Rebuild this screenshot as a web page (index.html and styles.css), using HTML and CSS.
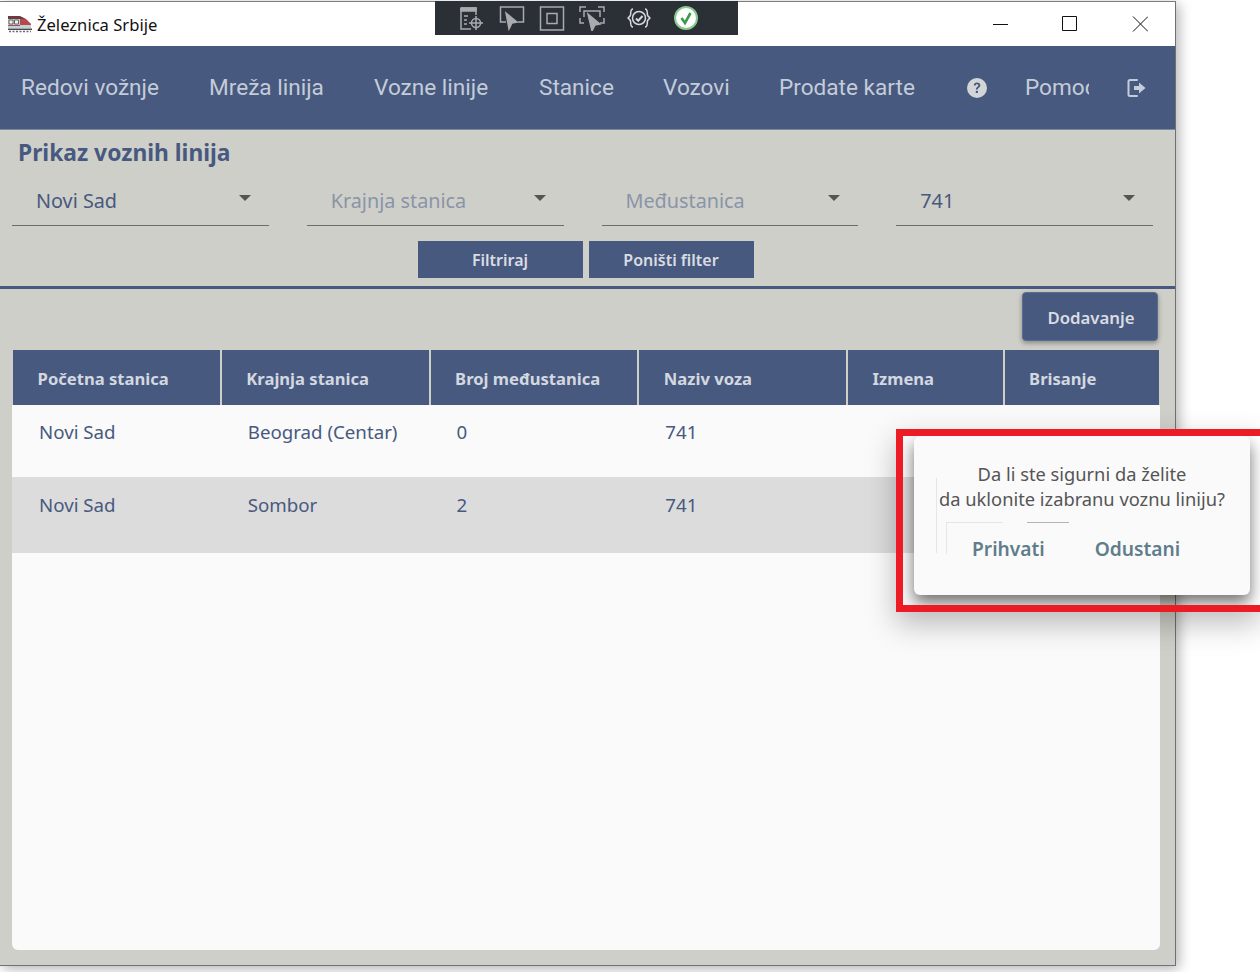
FILE: index.html
```html
<!DOCTYPE html>
<html lang="sr">

<head>
    <meta charset="UTF-8">
    <title>Železnica Srbije</title>
    <link rel="stylesheet" href="styles.css">
</head>

<body>
    <div class="window">
        <div class="titlebar">
            <svg class="app-icon" width="26" height="18" viewBox="0 0 26 18">
                <path d="M1 1h12l6 3H1z" fill="#6f3a3e" />
                <path d="M1 4h18l5 5v4H1z" fill="#c4d0d6" />
                <path d="M13 4h6l5 5v1H13z" fill="#b5484c" />
                <path d="M2 5h4v4H2zM7.500 5h4v4h-4z" fill="#eef2f4" stroke="#4a4a4a" stroke-width=".8" />
                <path d="M1 10.500h12" stroke="#b5484c" stroke-width="1" />
                <path d="M1 13.500h24V15H1z" fill="#4a4a4a" />
                <path d="M2 16.500h22" stroke="#6a6a6a" stroke-width="1.500" stroke-dasharray="2 1.500" />
            </svg>
            <span class="app-title">Železnica Srbije</span>
            <div class="win-controls">
                <svg width="16" height="16" viewBox="0 0 16 16">
                    <path d="M1 8.500h15" stroke="#111" fill="none" />
                </svg>
                <svg width="16" height="16" viewBox="0 0 16 16">
                    <path d="M.5 .5h14v14H.5z" stroke="#111" fill="none" />
                </svg>
                <svg width="16" height="16" viewBox="0 0 16 16">
                    <path d="M1 .5l15 15M16 .5l-15 15" stroke="#111" fill="none" />
                </svg>
            </div>
        </div>

        <ul class="nav">
            <li class="nav-redovi">Redovi vožnje</li>
            <li class="nav-mreza">Mreža linija</li>
            <li class="nav-vozne">Vozne linije</li>
            <li class="nav-stanice">Stanice</li>
            <li class="nav-vozovi">Vozovi</li>
            <li class="nav-karte">Prodate karte</li>
            <li class="nav-help">
                <svg width="20" height="20" viewBox="0 0 20 20">
                    <circle cx="10" cy="10" r="10" fill="#d3d6d8" />
                    <path d="M6.800 7.600c0-2 1.400-3.100 3.300-3.100s3.200 1.100 3.200 2.800c0 2.400-2.500 2.300-2.500 4.300H8.900c0-3 2.400-2.800 2.400-4.200 0-.7-.5-1.200-1.300-1.200s-1.300.5-1.400 1.400z" fill="#48597f" />
                    <rect x="8.800" y="12.800" width="2.100" height="2.200" fill="#48597f" />
                </svg>
            </li>
            <li class="nav-pomoc"><span>Pomoć</span></li>
            <li class="nav-logout">
                <svg width="19" height="20" viewBox="0 0 19 20">
                    <path d="M10 2H3a1.500 1.500 0 0 0-1.500 1.500v13A1.500 1.500 0 0 0 3 18h7" fill="none" stroke="#c3ccd8" stroke-width="2" stroke-linecap="round" />
                    <path d="M7 8h5V4.500L18.500 10 12 15.500V12H7z" fill="#c3ccd8" />
                </svg>
            </li>
        </ul>

        <div class="filter-panel">
            <h2 class="page-title">Prikaz voznih linija</h2>
            <div class="filters">
                <div class="select">Novi Sad<i class="arrow"></i></div>
                <div class="select empty">Krajnja stanica<i class="arrow"></i></div>
                <div class="select empty">Međustanica<i class="arrow"></i></div>
                <div class="select">741<i class="arrow"></i></div>
            </div>
            <div class="filter-buttons">
                <button type="button" class="btn">Filtriraj</button>
                <button type="button" class="btn">Poništi filter</button>
            </div>
        </div>

        <div class="content">
            <div class="add-row">
                <button type="button" class="btn-add">Dodavanje</button>
            </div>
            <div class="table">
                <div class="table-head">
                    <div class="th w-wide">Početna stanica</div>
                    <div class="th w-wide">Krajnja stanica</div>
                    <div class="th w-wide">Broj međustanica</div>
                    <div class="th w-wide">Naziv voza</div>
                    <div class="th w-narrow">Izmena</div>
                    <div class="th w-narrow">Brisanje</div>
                </div>
                <div class="table-row">
                    <div class="td w-wide">Novi Sad</div>
                    <div class="td w-wide">Beograd (Centar)</div>
                    <div class="td w-wide">0</div>
                    <div class="td w-wide">741</div>
                </div>
                <div class="table-row alt">
                    <div class="td w-wide">Novi Sad</div>
                    <div class="td w-wide">Sombor</div>
                    <div class="td w-wide">2</div>
                    <div class="td w-wide">741</div>
                </div>
            </div>
        </div>
    </div>

    <!-- alat za debug preko naslovne trake -->
    <div class="debug-bar">
        <svg width="26" height="26" viewBox="0 0 26 26" fill="none" stroke="#a9abae" stroke-width="1.500">
            <path d="M2 3h15v7M2 3v21h10" />
            <path d="M2 3h15v3H2z" fill="#a9abae" />
            <path d="M5 11h4M5 15h3M5 19h3" />
            <circle cx="17" cy="18" r="4.500" />
            <path d="M17 11v14M10 18h14" />
        </svg>
        <svg width="26" height="26" viewBox="0 0 26 26" fill="none" stroke="#a9abae" stroke-width="1.500">
            <path d="M7 17H1.500V2h23v15H19" />
            <path d="M7 8l11 9-5 1-3 6z" fill="#a9abae" />
        </svg>
        <svg width="26" height="26" viewBox="0 0 26 26" fill="none" stroke="#a9abae" stroke-width="1.500">
            <path d="M1.500 2h23v23h-23z" />
            <path d="M8 8.500h10v10H8z" />
        </svg>
        <svg width="26" height="26" viewBox="0 0 26 26" fill="none" stroke="#a9abae" stroke-width="1.500">
            <path d="M1 7V2h6M19 2h6v5M1 13v5h4M25 13v5h-4M5 12V6h16v6" />
            <path d="M9 9l12 10-5 1-3 6z" fill="#a9abae" />
        </svg>
        <svg class="gap-left" width="26" height="26" viewBox="0 0 26 26" fill="none" stroke="#d8d9da" stroke-width="1.500">
            <path d="M7 4C4 4 5 8 4.500 10S2 12.500 2 13s2 1 2.500 3S4 22 7 22M19 4c3 0 2 4 2.500 6s2.500 2.500 2.500 3-2 1-2.500 3 .5 6-2.500 6" />
            <circle cx="13" cy="13" r="6.500" />
            <path d="M10 13.500l2.200 2.200L16.500 11" stroke-width="2" />
        </svg>
        <svg class="gap-left" width="26" height="26" viewBox="0 0 26 26">
            <circle cx="13" cy="13" r="11" fill="#fff" stroke="#86c98c" stroke-width="2" />
            <path d="M8.500 13l3.500 5 5.500-10" fill="none" stroke="#3f9a48" stroke-width="2.600" />
        </svg>
    </div>

    <div class="dialog-frame">
        <div class="dialog">
            <p class="dialog-text">Da li ste sigurni da želite<br>da uklonite izabranu voznu liniju?</p>
            <div class="dialog-actions">
                <button type="button" class="dialog-btn">Prihvati</button>
                <button type="button" class="dialog-btn">Odustani</button>
            </div>
            <i class="ghost-left"></i>
            <i class="ghost-corner"></i>
            <i class="ghost-dark"></i>
        </div>
    </div>
</body>

</html>
```

FILE: styles.css
```css
/* Prozor aplikacije */
html,
body {
    margin: 0;
    padding: 0;
    height: 972px;
    overflow: hidden;
    background-color: #fff;
}

body {
    font-family: "Noto Sans", sans-serif;
    position: relative;
}

.window {
    width: 1175px;
    height: 963px;
    margin-top: 1px;
    border-top: 1px solid #7d7d7d;
    border-right: 1px solid #707070;
    border-bottom: 1px solid #6f7378;
    box-shadow: 3px 3px 12px rgba(0, 0, 0, 0.3);
    background-color: #cecfc8;
    display: flex;
    flex-direction: column;
}

.titlebar {
    height: 44px;
    flex: none;
    background-color: #fff;
    display: flex;
    align-items: center;
    padding-left: 7px;
}

.app-icon {
    margin-right: 4px;
}

.app-title {
    font-size: 16.6px;
    color: #111;
}

.win-controls {
    margin-left: auto;
    display: flex;
    gap: 54px;
    padding-right: 27px;
}

/* Glavni meni */
.nav {
    list-style-type: none;
    margin: 0;
    padding: 0;
    height: 83px;
    flex: none;
    background-color: #48597f;
    border-bottom: 1px solid #7c88a0;
    display: flex;
    align-items: center;
    font-family: Roboto, sans-serif;
    font-size: 22.6px;
    color: #c3ccd8;
    white-space: nowrap;
}

.nav-redovi {
    margin-left: 21px;
    width: 188px;
}

.nav-mreza {
    width: 165px;
}

.nav-vozne {
    width: 165px;
}

.nav-stanice {
    width: 124px;
}

.nav-vozovi {
    width: 116px;
}

.nav-karte {
    width: 188px;
}

.nav-help {
    width: 58px;
    display: flex;
}

.nav-pomoc {
    width: 64px;
    overflow: hidden;
    margin-right: 38px;
}

.nav-logout {
    display: flex;
}

/* Filteri */
.filter-panel {
    height: 159px;
    flex: none;
    box-sizing: border-box;
    border-bottom: 3px solid #48597f;
    padding: 6px 22px 0 12px;
}

.page-title {
    margin: 0 0 0 6px;
    font-size: 22.8px;
    line-height: 34px;
    font-weight: 700;
    color: #48597f;
}

.filters {
    display: flex;
    gap: 38px;
    margin-top: 8px;
}

.select {
    width: 257px;
    height: 48px;
    box-sizing: border-box;
    border-bottom: 1px solid #6b6d68;
    padding: 9px 0 0 24px;
    font-size: 19.8px;
    line-height: 28px;
    color: #48597f;
    position: relative;
}

.select.empty {
    color: #8a94a8;
}

.arrow {
    position: absolute;
    top: 17px;
    right: 18px;
    border-top: 6px solid #555;
    border-left: 6px solid transparent;
    border-right: 6px solid transparent;
}

.filter-buttons {
    display: flex;
    justify-content: center;
    gap: 6px;
    margin-top: 15px;
    padding-left: 6px;
}

.btn {
    width: 165px;
    height: 37px;
    padding: 0;
    border: none;
    background-color: #48597f;
    color: #d9dde3;
    font-family: "Noto Sans", sans-serif;
    font-size: 16px;
    font-weight: 600;
}

/* Tabela */
.content {
    flex: 1;
    display: flex;
    flex-direction: column;
    padding: 0 15px 15px 12px;
}

.add-row {
    display: flex;
    justify-content: flex-end;
    height: 61px;
    padding-top: 3px;
    box-sizing: border-box;
}

.btn-add {
    width: 136px;
    height: 49px;
    margin-right: 2px;
    padding: 2px 0 0 2px;
    border: 1px solid #5c6c90;
    border-radius: 4px;
    background-color: #48597f;
    color: #d9dde3;
    font-family: "Noto Sans", sans-serif;
    font-size: 16.8px;
    font-weight: 600;
    box-shadow: 0 2px 5px rgba(0, 0, 0, 0.35);
}

.table {
    flex: 1;
    background-color: #fafafa;
    border-radius: 0 0 6px 6px;
}

.table-head {
    display: flex;
    gap: 2px;
    height: 55px;
    padding-left: 1px;
    background-color: #cecfc8;
}

.th {
    background-color: #48597f;
    color: #d3d8e0;
    font-size: 16.6px;
    font-weight: 700;
    line-height: 57px;
    padding-left: 24.6px;
    box-sizing: border-box;
    white-space: nowrap;
}

.w-wide {
    width: 206.75px;
}

.w-narrow {
    width: 154.5px;
}

.table-row {
    display: flex;
    gap: 2px;
    height: 72px;
    padding-left: 1px;
    font-size: 18.7px;
    color: #48597f;
}

.table-row.alt {
    height: 76px;
    background-color: #dcdcdc;
}

.td {
    box-sizing: border-box;
    padding: 13px 0 0 26px;
    line-height: 28px;
}

.table-row.alt .td {
    padding-top: 14px;
}

/* Dijalog i crveni okvir */
.debug-bar {
    position: absolute;
    top: 1px;
    left: 435px;
    width: 303px;
    height: 34px;
    box-sizing: border-box;
    padding-left: 24px;
    background-color: #2b2f36;
    display: flex;
    align-items: center;
    gap: 14px;
}

.gap-left {
    margin-left: 7px;
}

.dialog-frame {
    position: absolute;
    top: 429px;
    left: 896px;
    width: 364px;
    height: 183px;
    box-sizing: border-box;
    border: 7px solid #ed1c24;
    border-right: none;
    padding-left: 11px;
    overflow: hidden;
    box-shadow: 0 12px 28px rgba(0, 0, 0, 0.26);
}

.dialog {
    width: 336px;
    height: 159px;
    box-sizing: border-box;
    padding-top: 25px;
    background-color: #fafafa;
    border-radius: 6px;
    box-shadow: 0 8px 16px rgba(0, 0, 0, 0.55);
    text-align: center;
    position: relative;
}

.dialog-text {
    margin: 0;
    font-size: 18.3px;
    line-height: 25px;
    color: #555;
}

.dialog-actions {
    display: flex;
    padding: 24px 0 0 58px;
    gap: 50px;
}

.dialog-btn {
    padding: 0;
    border: none;
    background: none;
    color: #607d8b;
    font-family: "Noto Sans", sans-serif;
    font-size: 19.2px;
    font-weight: 600;
    line-height: 28px;
}

/* tanke linije preko dijaloga, kao na slici */
.ghost-left {
    position: absolute;
    left: 22px;
    top: 42px;
    height: 75px;
    border-left: 1px solid #e6e6e6;
}

.ghost-corner {
    position: absolute;
    left: 32px;
    top: 86px;
    width: 56px;
    height: 31px;
    border-left: 1px solid #e6e6e6;
    border-top: 1px solid #e6e6e6;
}

.ghost-dark {
    position: absolute;
    left: 113px;
    top: 86px;
    width: 42px;
    border-top: 1px solid #b4b4b4;
}
```
